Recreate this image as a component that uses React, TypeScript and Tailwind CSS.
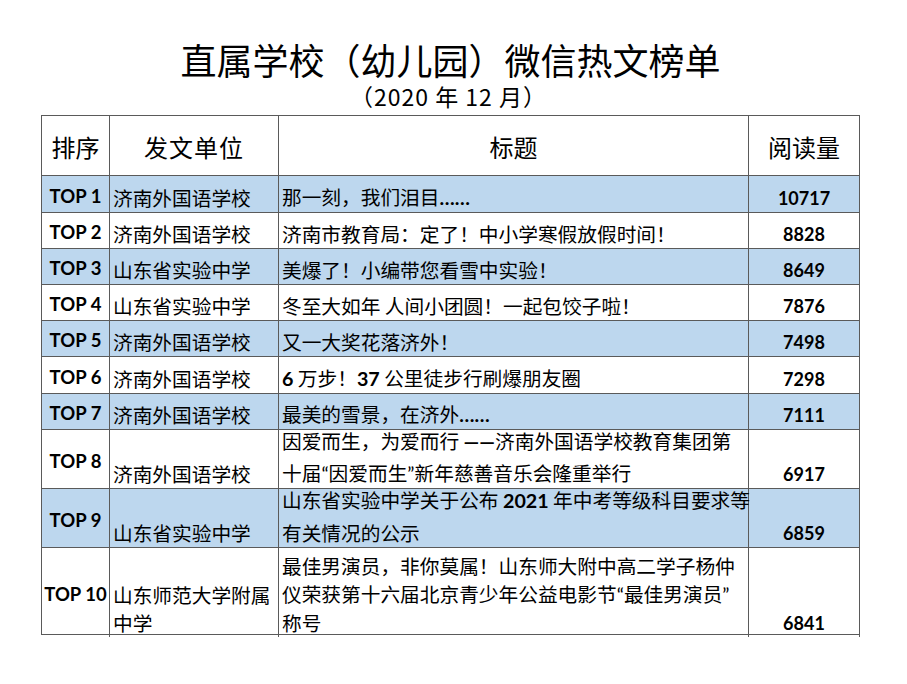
import React from "react";

const CJK = '"Noto Sans CJK SC", "Noto Sans", sans-serif';
const LAT = 'Lato, "Noto Sans CJK SC", sans-serif';

type Row = {
  rank: string;
  unit: React.ReactNode[];
  title: React.ReactNode[];
  reads: string;
  h: number;
  blue: boolean;
  kind: "single" | "double" | "triple";
};

const B = ({ children }: { children: React.ReactNode }) => (
  <span className="font-bold" style={{ fontFamily: LAT }}>
    {children}
  </span>
);
const L = ({ children }: { children: React.ReactNode }) => (
  <span style={{ fontFamily: LAT }}>{children}</span>
);

const rows: Row[] = [
  { rank: "TOP 1", unit: ["济南外国语学校"], title: [<>那一刻，我们泪目<B>……</B></>], reads: "10717", h: 37, blue: true, kind: "single" },
  { rank: "TOP 2", unit: ["济南外国语学校"], title: ["济南市教育局：定了！中小学寒假放假时间！"], reads: "8828", h: 36, blue: false, kind: "single" },
  { rank: "TOP 3", unit: ["山东省实验中学"], title: ["美爆了！小编带您看雪中实验！"], reads: "8649", h: 36, blue: true, kind: "single" },
  { rank: "TOP 4", unit: ["山东省实验中学"], title: ["冬至大如年 人间小团圆！一起包饺子啦！"], reads: "7876", h: 36, blue: false, kind: "single" },
  { rank: "TOP 5", unit: ["济南外国语学校"], title: ["又一大奖花落济外！"], reads: "7498", h: 36, blue: true, kind: "single" },
  { rank: "TOP 6", unit: ["济南外国语学校"], title: [<><B>6</B> 万步！<B>37</B> 公里徒步行刷爆朋友圈</>], reads: "7298", h: 37, blue: false, kind: "single" },
  { rank: "TOP 7", unit: ["济南外国语学校"], title: [<>最美的雪景，在济外<B>……</B></>], reads: "7111", h: 36, blue: true, kind: "single" },
  {
    rank: "TOP 8",
    unit: ["济南外国语学校"],
    title: [<>因爱而生，为爱而行 <B>——</B>济南外国语学校教育集团第</>, <>十届<L>“</L>因爱而生<L>”</L>新年慈善音乐会隆重举行</>],
    reads: "6917",
    h: 59,
    blue: false,
    kind: "double",
  },
  {
    rank: "TOP 9",
    unit: ["山东省实验中学"],
    title: [<>山东省实验中学关于公布 <B>2021</B> 年中考等级科目要求等</>, "有关情况的公示"],
    reads: "6859",
    h: 59,
    blue: true,
    kind: "double",
  },
  {
    rank: "TOP 10",
    unit: ["山东师范大学附属", "中学"],
    title: [
      "最佳男演员，非你莫属！山东师大附中高二学子杨仲",
      <>仪荣获第十六届北京青少年公益电影节<L>“</L>最佳男演员<L>”</L></>,
      "称号",
    ],
    reads: "6841",
    h: 87,
    blue: false,
    kind: "triple",
  },
];

export default function App() {
  return (
    <div className="w-[907px] h-[684px] bg-white text-black overflow-hidden" style={{ fontFamily: CJK }}>
      <div className="pt-[39px] pr-[6px] text-center text-[36px] leading-[40px]">
        直属学校（幼儿园）微信热文榜单
      </div>
      <div className="mt-[4px] pr-[10px] text-center text-[23px] leading-[26px] tracking-[1px]">（2020 年 12 月）</div>
      <div className="mt-[6px] ml-[41px] w-[819px] border-l border-t border-[#5a5a5a]">
        <div className="grid grid-cols-[68px_169px_470px_111px] h-[60px] border-b border-[#5a5a5a]">
          <div className="border-r border-[#5a5a5a] flex items-center justify-center text-[24px] pt-[2px]">排序</div>
          <div className="border-r border-[#5a5a5a] flex items-center justify-center text-[24px] tracking-[1px] pt-[2px]">发文单位</div>
          <div className="border-r border-[#5a5a5a] flex items-center justify-center text-[24px] pt-[2px]">标题</div>
          <div className="border-r border-[#5a5a5a] flex items-center justify-center text-[24px] pt-[2px]">阅读量</div>
        </div>
        {rows.map((r) => (
          <div
            key={r.rank}
            className={`grid grid-cols-[68px_169px_470px_111px] border-b border-[#5a5a5a] ${r.blue ? "bg-[#bdd7ee]" : "bg-white"}`}
            style={{ height: r.h }}
          >
            <div
              className="border-r border-[#5a5a5a] flex items-center justify-center font-bold text-[18.5px] whitespace-nowrap pt-[5px]"
              style={{ fontFamily: LAT }}
            >
              {r.rank}
            </div>
            <div
              className={`border-r border-[#5a5a5a] flex flex-col justify-end pl-[3px] text-[19.7px] whitespace-nowrap ${
                r.kind === "triple" ? "leading-[28px] pb-0" : "leading-[22px] pb-[3px]"
              }`}
            >
              {r.unit.map((u, i) => (
                <div key={i}>{u}</div>
              ))}
            </div>
            <div
              className={`border-r border-[#5a5a5a] flex flex-col pl-[3px] text-[19.7px] whitespace-nowrap ${
                r.kind === "single"
                  ? "justify-end leading-[22px] pb-[3px]"
                  : r.kind === "double"
                  ? "justify-between leading-[22px] pb-[3px]"
                  : "justify-start leading-[28px] pt-[4px]"
              }`}
            >
              {r.title.map((t, i) => (
                <div key={i}>{t}</div>
              ))}
            </div>
            <div
              className="border-r border-[#5a5a5a] flex items-end justify-center font-bold text-[18px] leading-[22px] pb-[3px]"
              style={{ fontFamily: LAT }}
            >
              {r.reads}
            </div>
          </div>
        ))}
      </div>
    </div>
  );
}
